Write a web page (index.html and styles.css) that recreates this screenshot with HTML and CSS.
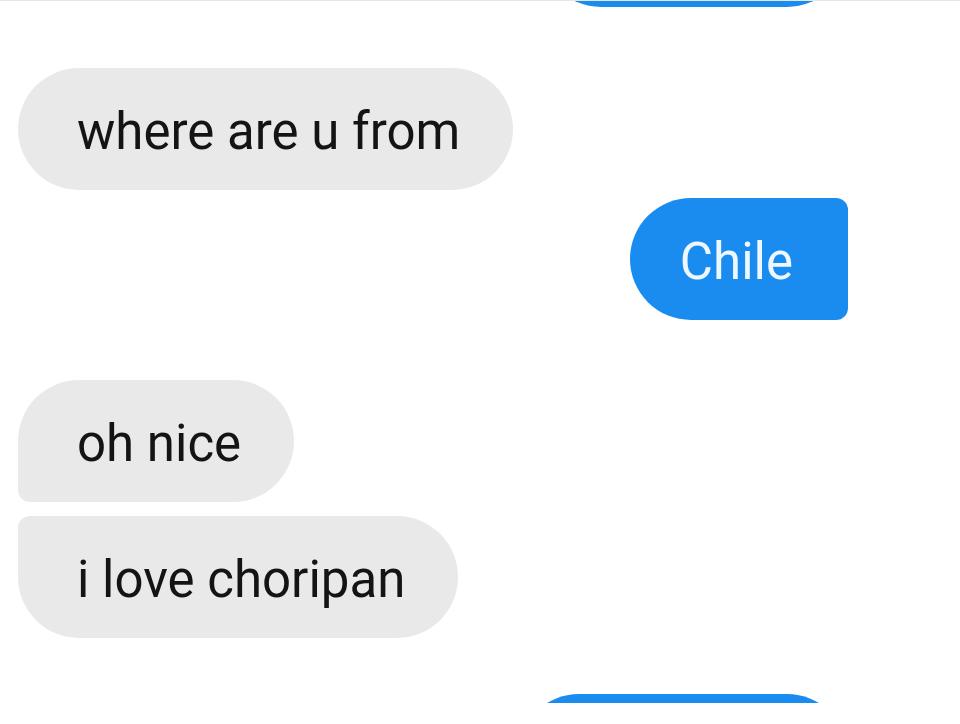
FILE: index.html
```html
<!DOCTYPE html>
<html lang="en">
<head>
    <meta charset="UTF-8">
    <meta name="viewport" content="width=device-width, initial-scale=1.0">
    <title>Chat</title>
    <link rel="stylesheet" href="styles.css">
</head>
<body>
    <div class="chat">
        <div class="bubble sent sent-top"></div>
        <div class="bubble received where">where are u from</div>
        <div class="bubble sent chile">Chile</div>
        <div class="bubble received first nice">oh nice</div>
        <div class="bubble received last chori">i love choripan</div>
        <div class="bubble sent sent-bottom"></div>
    </div>
</body>
</html>
```

FILE: styles.css
```css
body {
    margin: 0;
    background-color: #FFFFFF;
    font-family: Roboto, "Liberation Sans", Arial, sans-serif;
}
.chat {
    display: flex;
    flex-direction: column;
    height: 703px;
    overflow: hidden;
    border-top: 1px solid #E6E6E6;
    box-sizing: border-box;
}
.bubble {
    display: flex;
    align-items: center;
    flex-shrink: 0;
    box-sizing: border-box;
    height: 122px;
    padding: 5px 53px 0 59px;
    border-radius: 61px;
    font-size: 51px;
    white-space: nowrap;
}
.received {
    align-self: flex-start;
    margin-left: 18px;
    background-color: #E9E9E9;
    color: #141414;
}
.sent {
    align-self: flex-end;
    margin-right: 112px;
    background-color: #1A8CF0;
    color: #EEF7FF;
}
.sent-top {
    width: 308px;
    margin-top: -116px;
}
.where {
    margin-top: 61px;
}
.chile {
    margin-top: 8px;
    padding: 5px 55px 0 50px;
    border-radius: 61px 12px 12px 61px;
}
.nice {
    margin-top: 60px;
}
.first {
    border-radius: 61px 61px 61px 12px;
}
.last {
    margin-top: 14px;
    border-radius: 12px 61px 61px 61px;
}
.sent-bottom {
    width: 330px;
    margin-top: 56px;
}
```
